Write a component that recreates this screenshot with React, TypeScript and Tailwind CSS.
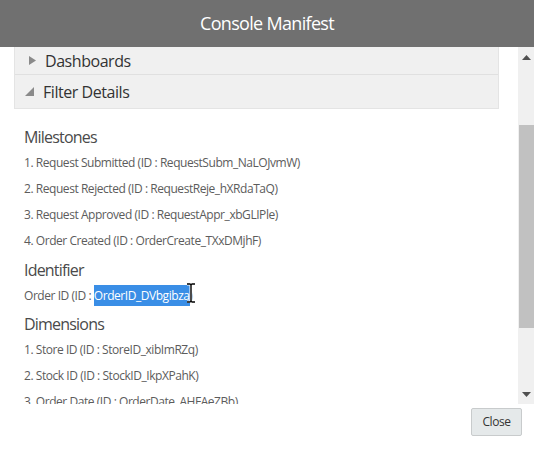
import { ReactNode } from "react";

const MILESTONES = [
  "1. Request Submitted (ID : RequestSubm_NaLOJvmW)",
  "2. Request Rejected (ID : RequestReje_hXRdaTaQ)",
  "3. Request Approved (ID : RequestAppr_xbGLIPle)",
  "4. Order Created (ID : OrderCreate_TXxDMjhF)",
];

const DIMENSIONS = [
  "1. Store ID (ID : StoreID_xibImRZq)",
  "2. Stock ID (ID : StockID_IkpXPahK)",
  "3. Order Date (ID : OrderDate_AHFAeZBb)",
];

const Heading = ({ children, className }: { children: ReactNode; className?: string }) => (
  <div className={`h-[22px] leading-[22px] text-[16px] tracking-[-0.05em] text-[#4a4a4a] ${className ?? ""}`}>
    {children}
  </div>
);

const Item = ({ children }: { children: ReactNode }) => (
  <div className="h-[26px] leading-[26px] text-[12px] text-[#5c5c5c] whitespace-nowrap">{children}</div>
);

export default function App() {
  return (
    <div
      className="w-[534px] h-[454px] bg-white flex flex-col overflow-hidden tracking-[-0.028em]"
      style={{ fontFamily: '"Open Sans", "Noto Sans", sans-serif' }}
    >
      {/* title bar */}
      <header className="h-[47px] flex-shrink-0 bg-[#707070] flex items-center justify-center text-white text-[18px] tracking-[-0.038em]">
        Console Manifest
      </header>

      {/* scrolling body */}
      <div className="h-[357px] flex flex-shrink-0">
        <div className="flex-1 overflow-hidden pl-[14px] pr-[19px]">
          <div className="bg-[#f0f0f0] border border-t-0 border-[#e4e4e4]">
            <div className="h-[28px] flex items-center pl-[14px] gap-[9px] border-b border-[#e0e0e0] text-[16px] text-[#333]">
              <svg width="7" height="9" viewBox="0 0 7 9">
                <path d="M0 0 L7 4.5 L0 9 Z" fill="#8a8a8a" />
              </svg>
              Dashboards
            </div>
            <div className="h-[33px] flex items-center pl-[10px] gap-[9px] text-[16px] text-[#333]">
              <svg width="9" height="9" viewBox="0 0 9 9">
                <path d="M9 0 L9 9 L0 9 Z" fill="#8a8a8a" />
              </svg>
              Filter Details
            </div>
          </div>

          <div className="pl-[10px] pt-[17px]">
            <Heading className="mb-[2px]">Milestones</Heading>
            {MILESTONES.map((m) => (
              <Item key={m}>{m}</Item>
            ))}
            <Heading className="mt-[5px] mb-[2px]">Identifier</Heading>
            <div className="h-[26px] leading-[26px] text-[12px] text-[#5c5c5c] whitespace-nowrap">
              Order ID (ID :{" "}
              <span className="relative bg-[#3a8ee6] text-white py-[2px]">
                OrderID_DVbgibza
                <svg className="absolute right-[-7px] top-[-2px]" width="12" height="20" viewBox="0 0 12 20">
                  <path d="M2 1 H5 Q6 1 6 3 V17 Q6 19 5 19 H2 M10 1 H7 Q6 1 6 3 M6 17 Q6 19 7 19 H10" stroke="white" strokeWidth="3" fill="none" />
                  <path d="M2 1 H5 Q6 1 6 3 V17 Q6 19 5 19 H2 M10 1 H7 Q6 1 6 3 M6 17 Q6 19 7 19 H10" stroke="black" strokeWidth="1.4" fill="none" />
                </svg>
              </span>
              )
            </div>
            <Heading className="mt-[4px] mb-[2px]">Dimensions</Heading>
            {DIMENSIONS.map((d) => (
              <Item key={d}>{d}</Item>
            ))}
          </div>
        </div>

        {/* scrollbar */}
        <div className="w-[16px] flex-shrink-0 bg-[#f0f0f0] flex flex-col items-center">
          <div className="h-[16px] flex items-center justify-center mt-[2px]">
            <svg width="9" height="5" viewBox="0 0 9 5">
              <path d="M0 5 L4.5 0 L9 5 Z" fill="#505050" />
            </svg>
          </div>
          <div className="mt-[60px] w-[15px] ml-[1px] h-[203px] bg-[#c1c1c1]" />
          <div className="flex-1" />
          <div className="h-[16px] flex items-center justify-center mb-[2px]">
            <svg width="9" height="5" viewBox="0 0 9 5">
              <path d="M0 0 L9 0 L4.5 5 Z" fill="#505050" />
            </svg>
          </div>
        </div>
      </div>

      {/* footer */}
      <footer className="flex justify-end pr-[12px] pt-[4px]">
        <button
          type="button"
          className="w-[51px] h-[28px] bg-[#e5e9ea] border border-[#c8cbcc] rounded-[2px] text-[12px] text-[#333]"
        >
          Close
        </button>
      </footer>
    </div>
  );
}
